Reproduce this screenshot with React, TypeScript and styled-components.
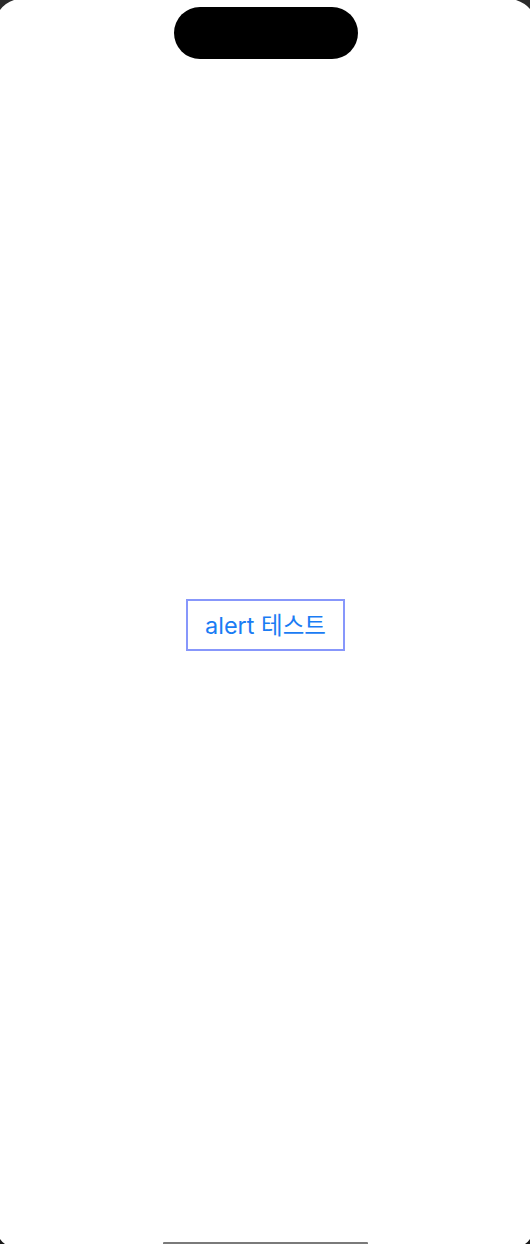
import React from "react";
import styled, { createGlobalStyle } from "styled-components";

const GlobalStyle = createGlobalStyle`
  html, body {
    margin: 0;
    padding: 0;
    background: #ffffff;
  }
  * { box-sizing: border-box; }
`;

const Screen = styled.div`
  position: relative;
  width: 530px;
  height: 1244px;
  overflow: hidden;
  background: #ffffff;
  display: flex;
  align-items: center;
  justify-content: center;
  padding-top: 6px;
  padding-left: 1px;
`;

const Island = styled.div`
  position: absolute;
  top: 7px;
  left: 174px;
  width: 184px;
  height: 52px;
  border-radius: 26px;
  background: #000000;
`;

const HomeIndicator = styled.div`
  position: absolute;
  bottom: 0;
  left: 163px;
  width: 205px;
  height: 2px;
  background: #7a7a7a;
  border-radius: 1px 1px 0 0;
`;

const Corner = styled.svg<{ $pos: "tl" | "tr" | "bl" | "br" }>`
  position: absolute;
  width: 20px;
  height: 20px;
  ${({ $pos }) => ($pos[0] === "t" ? "top: 0;" : "bottom: 0;")}
  ${({ $pos }) => ($pos[1] === "l" ? "left: 0;" : "right: 0;")}
`;

const AlertButton = styled.button`
  font-family: Inter, "Noto Sans CJK KR", sans-serif;
  font-size: 23.5px;
  font-weight: 400;
  color: #1a7cf4;
  background: transparent;
  border: 2px solid #8797fb;
  border-radius: 0;
  padding: 2px 0 0;
  height: 52px;
  width: 159px;
  line-height: 46px;
  white-space: nowrap;
  cursor: pointer;
`;

export default function App() {
  return (
    <>
      <GlobalStyle />
      <Screen>
        <Corner $pos="tl" viewBox="0 0 20 20">
          <path d="M0 0 L14 0 Q5 3 0 10 Z" fill="#2b2b2b" />
        </Corner>
        <Corner $pos="tr" viewBox="0 0 20 20">
          <path d="M20 0 L6 0 Q15 3 20 9 Z" fill="#2b2b2b" />
        </Corner>
        <Corner $pos="bl" viewBox="0 0 20 20">
          <path d="M0 20 L5 20 Q2 18 0 15 Z" fill="#1a1a1a" />
        </Corner>
        <Corner $pos="br" viewBox="0 0 20 20">
          <path d="M20 20 L15 20 Q18 18 20 15 Z" fill="#1a1a1a" />
        </Corner>
        <Island />
        <AlertButton>alert 테스트</AlertButton>
        <HomeIndicator />
      </Screen>
    </>
  );
}
